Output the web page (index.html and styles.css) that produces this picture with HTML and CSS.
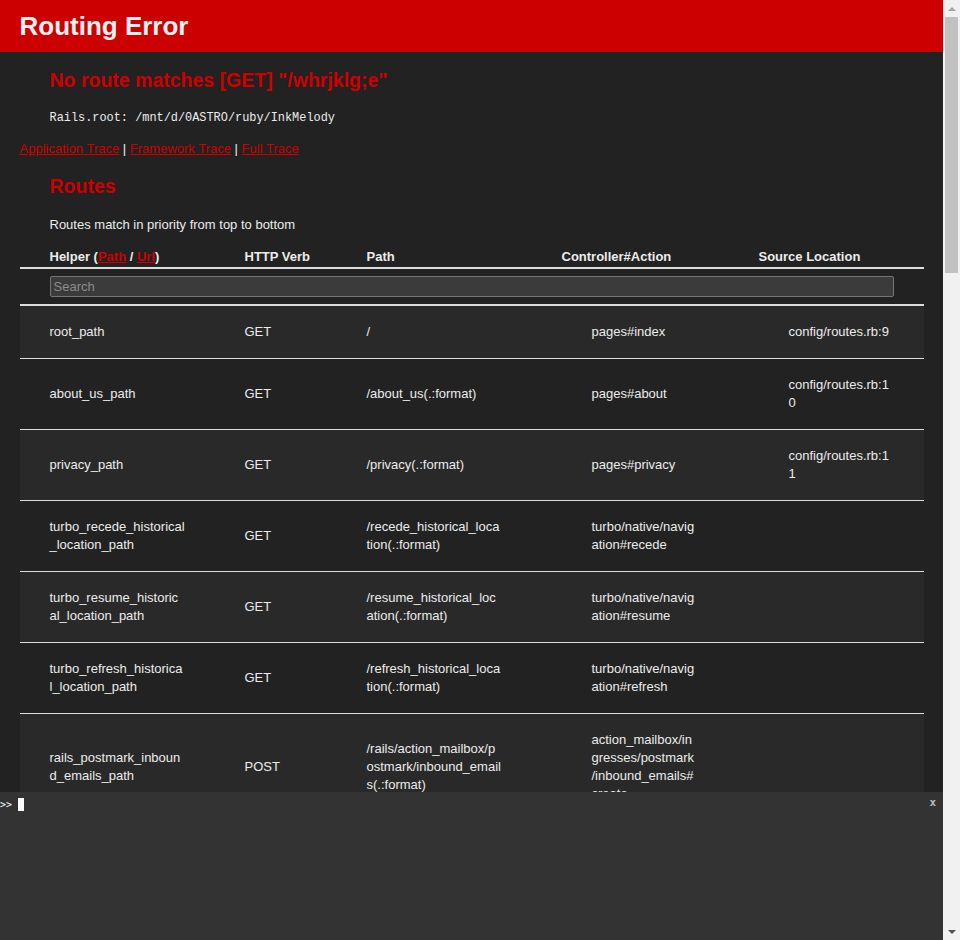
FILE: index.html
```html
<!DOCTYPE html>
<html lang="en">
<head>
<meta charset="utf-8">
<title>Action Controller: Exception caught</title>
<link rel="stylesheet" href="styles.css">
</head>
<body>
<header class="banner">
  <h1 class="banner-title">Routing Error</h1>
</header>
<main class="container">
  <h2 class="heading">No route matches [GET] "/whrjklg;e"</h2>
  <p class="root-line"><code class="root-code">Rails.root: /mnt/d/0ASTRO/ruby/InkMelody</code></p>
  <div class="trace-links">
    <a href="#" class="trace-link">Application Trace</a> |
    <a href="#" class="trace-link">Framework Trace</a> |
    <a href="#" class="trace-link">Full Trace</a>
  </div>
  <h2 class="heading">Routes</h2>
  <p class="note">Routes match in priority from top to bottom</p>

  <table class="route-table">
    <colgroup>
      <col class="col-helper"><col class="col-verb"><col class="col-path"><col class="col-action"><col class="col-source">
    </colgroup>
    <thead>
      <tr class="head-row">
        <th>Helper (<a href="#" class="th-link">Path</a> / <a href="#" class="th-link">Url</a>)</th>
        <th>HTTP Verb</th>
        <th>Path</th>
        <th>Controller#Action</th>
        <th>Source Location</th>
      </tr>
      <tr class="search-row">
        <th colspan="5"><input type="search" class="search" placeholder="Search"></th>
      </tr>
    </thead>
    <tbody>
      <tr><td>root_path</td><td>GET</td><td>/</td><td class="wide">pages#index</td><td class="wide">config/routes.rb:9</td></tr>
      <tr><td>about_us_path</td><td>GET</td><td>/about_us(.:format)</td><td class="wide">pages#about</td><td class="wide">config/routes.rb:10</td></tr>
      <tr><td>privacy_path</td><td>GET</td><td>/privacy(.:format)</td><td class="wide">pages#privacy</td><td class="wide">config/routes.rb:11</td></tr>
      <tr><td>turbo_recede_historical_location_path</td><td>GET</td><td>/recede_historical_location(.:format)</td><td class="wide">turbo/native/navigation#recede</td><td class="wide"></td></tr>
      <tr><td>turbo_resume_historical_location_path</td><td>GET</td><td>/resume_historical_location(.:format)</td><td class="wide">turbo/native/navigation#resume</td><td class="wide"></td></tr>
      <tr><td>turbo_refresh_historical_location_path</td><td>GET</td><td>/refresh_historical_location(.:format)</td><td class="wide">turbo/native/navigation#refresh</td><td class="wide"></td></tr>
      <tr><td>rails_postmark_inbound_emails_path</td><td>POST</td><td>/rails/action_mailbox/postmark/inbound_emails(.:format)</td><td class="wide">action_mailbox/ingresses/postmark/inbound_emails#create</td><td class="wide"></td></tr>
      <tr><td>rails_relay_inbound_emails_path</td><td>POST</td><td>/rails/action_mailbox/relay/inbound_emails(.:format)</td><td class="wide">action_mailbox/ingresses/relay/inbound_emails#create</td><td class="wide"></td></tr>
      <tr><td>rails_sendgrid_inbound_emails_path</td><td>POST</td><td>/rails/action_mailbox/sendgrid/inbound_emails(.:format)</td><td class="wide">action_mailbox/ingresses/sendgrid/inbound_emails#create</td><td class="wide"></td></tr>
      <tr><td>rails_mandrill_inbound_health_check_path</td><td>GET</td><td>/rails/action_mailbox/mandrill/inbound_emails(.:format)</td><td class="wide">action_mailbox/ingresses/mandrill/inbound_emails#health_check</td><td class="wide"></td></tr>
      <tr><td>rails_mandrill_inbound_emails_path</td><td>POST</td><td>/rails/action_mailbox/mandrill/inbound_emails(.:format)</td><td class="wide">action_mailbox/ingresses/mandrill/inbound_emails#create</td><td class="wide"></td></tr>
      <tr><td>rails_mailgun_inbound_emails_path</td><td>POST</td><td>/rails/action_mailbox/mailgun/inbound_emails/mime(.:format)</td><td class="wide">action_mailbox/ingresses/mailgun/inbound_emails#create</td><td class="wide"></td></tr>
      <tr><td>rails_conductor_inbound_emails_path</td><td>GET</td><td>/rails/conductor/action_mailbox/inbound_emails(.:format)</td><td class="wide">rails/conductor/action_mailbox/inbound_emails#index</td><td class="wide"></td></tr>
      <tr><td></td><td>POST</td><td>/rails/conductor/action_mailbox/inbound_emails(.:format)</td><td class="wide">rails/conductor/action_mailbox/inbound_emails#create</td><td class="wide"></td></tr>
      <tr><td>new_rails_conductor_inbound_email_path</td><td>GET</td><td>/rails/conductor/action_mailbox/inbound_emails/new(.:format)</td><td class="wide">rails/conductor/action_mailbox/inbound_emails#new</td><td class="wide"></td></tr>
      <tr><td>rails_conductor_inbound_email_path</td><td>GET</td><td>/rails/conductor/action_mailbox/inbound_emails/:id(.:format)</td><td class="wide">rails/conductor/action_mailbox/inbound_emails#show</td><td class="wide"></td></tr>
      <tr><td>new_rails_conductor_inbound_email_source_path</td><td>GET</td><td>/rails/conductor/action_mailbox/inbound_emails/sources/new(.:format)</td><td class="wide">rails/conductor/action_mailbox/inbound_emails/sources#new</td><td class="wide"></td></tr>
      <tr><td>rails_conductor_inbound_email_sources_path</td><td>POST</td><td>/rails/conductor/action_mailbox/inbound_emails/sources(.:format)</td><td class="wide">rails/conductor/action_mailbox/inbound_emails/sources#create</td><td class="wide"></td></tr>
      <tr><td>rails_conductor_inbound_email_reroute_path</td><td>POST</td><td>/rails/conductor/action_mailbox/:inbound_email_id/reroute(.:format)</td><td class="wide">rails/conductor/action_mailbox/reroutes#create</td><td class="wide"></td></tr>
      <tr><td>rails_conductor_inbound_email_incinerate_path</td><td>POST</td><td>/rails/conductor/action_mailbox/:inbound_email_id/incinerate(.:format)</td><td class="wide">rails/conductor/action_mailbox/incinerates#create</td><td class="wide"></td></tr>
      <tr><td>rails_service_blob_path</td><td>GET</td><td>/rails/active_storage/blobs/redirect/:signed_id/*filename(.:format)</td><td class="wide">active_storage/blobs/redirect#show</td><td class="wide"></td></tr>
      <tr><td>rails_service_blob_proxy_path</td><td>GET</td><td>/rails/active_storage/blobs/proxy/:signed_id/*filename(.:format)</td><td class="wide">active_storage/blobs/proxy#show</td><td class="wide"></td></tr>
      <tr><td></td><td>GET</td><td>/rails/active_storage/blobs/:signed_id/*filename(.:format)</td><td class="wide">active_storage/blobs/redirect#show</td><td class="wide"></td></tr>
      <tr><td>rails_blob_representation_path</td><td>GET</td><td>/rails/active_storage/representations/redirect/:signed_blob_id/:variation_key/*filename(.:format)</td><td class="wide">active_storage/representations/redirect#show</td><td class="wide"></td></tr>
      <tr><td>rails_blob_representation_proxy_path</td><td>GET</td><td>/rails/active_storage/representations/proxy/:signed_blob_id/:variation_key/*filename(.:format)</td><td class="wide">active_storage/representations/proxy#show</td><td class="wide"></td></tr>
      <tr><td></td><td>GET</td><td>/rails/active_storage/representations/:signed_blob_id/:variation_key/*filename(.:format)</td><td class="wide">active_storage/representations/redirect#show</td><td class="wide"></td></tr>
      <tr><td>rails_disk_service_path</td><td>GET</td><td>/rails/active_storage/disk/:encoded_key/*filename(.:format)</td><td class="wide">active_storage/disk#show</td><td class="wide"></td></tr>
      <tr><td>update_rails_disk_service_path</td><td>PUT</td><td>/rails/active_storage/disk/:encoded_token(.:format)</td><td class="wide">active_storage/disk#update</td><td class="wide"></td></tr>
      <tr><td>rails_direct_uploads_path</td><td>POST</td><td>/rails/active_storage/direct_uploads(.:format)</td><td class="wide">active_storage/direct_uploads#create</td><td class="wide"></td></tr>
    </tbody>
  </table>
</main>

<div class="console">
  <div class="console-resizer"></div>
  <span class="console-close">x</span>
  <pre class="console-prompt">&gt;&gt; <span class="console-cursor"></span></pre>
</div>

<div class="scrollbar" aria-hidden="true">
  <span class="scroll-arrow scroll-up"></span>
  <span class="scroll-track"><span class="scroll-thumb"></span></span>
  <span class="scroll-arrow scroll-down"></span>
</div>
</body>
</html>
```

FILE: styles.css
```css
html, body {
  margin: 0;
  padding: 0;
}

html {
  background: #f1f1f1;
}

body {
  margin-right: 17px;
  background-color: #222;
  color: #ECECEC;
  font-family: "Liberation Sans", Arial, Helvetica, sans-serif;
  font-size: 13px;
  line-height: 18px;
}

.banner {
  color: #F0F0F0;
  background: #CC0000;
  padding: 6.5px 19.5px;
}

.banner-title {
  margin: 5.2px 0;
  font-size: 26px;
  line-height: 28.6px;
  font-weight: bold;
}

.container {
  padding: 0 19.5px 160px;
}

.heading {
  color: #CC0000;
  font-size: 19.5px;
  line-height: 25px;
  font-weight: bold;
  margin: 16px 0 15px;
  padding-left: 30px;
}

.root-line {
  margin: 0 0 13px;
  padding-left: 30px;
}

.root-code {
  font-family: "Liberation Mono", "DejaVu Sans Mono", monospace;
  font-size: 11.9px;
}

.trace-links {
  line-height: 18px;
}

.trace-link {
  color: #CC0000;
}

.note {
  margin: 17px 0 13px;
  padding-left: 30px;
}

.route-table {
  width: 100%;
  table-layout: fixed;
  border-collapse: separate;
  border-spacing: 0;
  overflow-wrap: break-word;
  word-wrap: break-word;
}

.col-helper { width: 195px; }
.col-verb { width: 122px; }
.col-path { width: 195px; }
.col-action { width: 197px; }
.col-source { width: 195px; }

.head-row th {
  text-align: left;
  font-weight: bold;
  padding: 1px 0 1px 30px;
  border-bottom: 2px solid #ddd;
}

.th-link {
  color: #CC0000;
}

.search-row th {
  padding: 7px 30px;
  border-bottom: 2px solid #ddd;
}

.search {
  -webkit-appearance: textfield;
  appearance: textfield;
  display: block;
  box-sizing: border-box;
  width: 100%;
  height: 21px;
  margin: 0;
  padding: 0 3px;
  background: #3b3b3b;
  border: 1px solid #767676;
  border-radius: 2px;
  color: #ECECEC;
  font-family: "Liberation Sans", Arial, sans-serif;
  font-size: 13px;
}

.search::placeholder {
  color: #8c8c8c;
}

.route-table td {
  padding: 17px 30px;
  border-bottom: 1px solid #ddd;
  vertical-align: middle;
}

.route-table td:first-child {
  padding-right: 29.5px;
}

.route-table td.wide {
  padding-left: 60px;
}

.route-table td:nth-child(4) {
  padding-right: 33px;
}

.route-table tbody tr:nth-child(odd) {
  background: #292929;
}

.console {
  position: fixed;
  left: 0;
  right: 17px;
  bottom: 0;
  height: 148px;
  background: #333;
  color: #fff;
}

.console-resizer {
  height: 4px;
}

.console-close {
  position: absolute;
  right: 7px;
  top: 3px;
  font-family: "DejaVu Sans Mono", monospace;
  font-size: 11px;
  font-weight: bold;
  line-height: 16px;
  color: #bbb;
}

.console-prompt {
  margin: 0;
  padding: 2px 0 0;
  font-family: "DejaVu Sans Mono", monospace;
  font-size: 10px;
  line-height: 13px;
  white-space: pre;
}

.console-cursor {
  display: inline-block;
  width: 6px;
  height: 13px;
  background: #fff;
  vertical-align: top;
}

/* classic window scrollbar, drawn over the right edge */
.scrollbar {
  position: fixed;
  top: 0;
  right: 0;
  bottom: 0;
  width: 17px;
  background: #f1f1f1;
  display: flex;
  flex-direction: column;
}

.scroll-arrow {
  flex: 0 0 17px;
  display: flex;
  align-items: center;
  justify-content: center;
}

.scroll-arrow::before {
  content: "";
  width: 0;
  height: 0;
  border-left: 4px solid transparent;
  border-right: 4px solid transparent;
}

.scroll-up::before {
  border-bottom: 4px solid #a3a3a3;
}

.scroll-down::before {
  border-top: 4px solid #505050;
}

.scroll-track {
  flex: 1;
  padding: 0 2px;
}

.scroll-thumb {
  display: block;
  height: 256px;
  background: #c1c1c1;
}
```
